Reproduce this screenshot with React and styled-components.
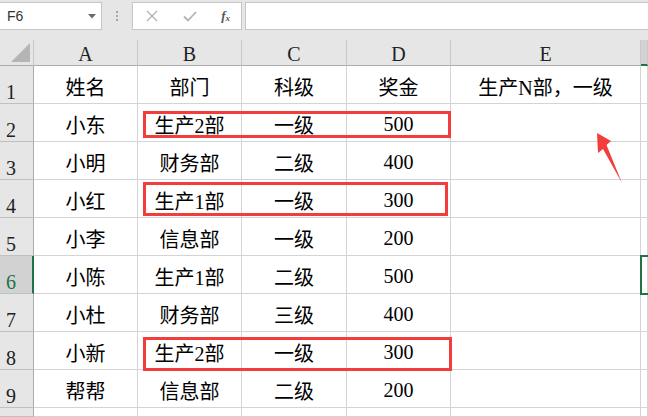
import React from "react";
import styled, { createGlobalStyle } from "styled-components";

const GlobalStyle = createGlobalStyle`
  html, body { margin: 0; padding: 0; overflow: hidden; }
  body { background: #e6e6e6; }
`;

const COLS = ["A", "B", "C", "D", "E"];

const ROWS = [
  ["姓名", "部门", "科级", "奖金", "生产N部，一级"],
  ["小东", "生产2部", "一级", "500", ""],
  ["小明", "财务部", "二级", "400", ""],
  ["小红", "生产1部", "一级", "300", ""],
  ["小李", "信息部", "一级", "200", ""],
  ["小陈", "生产1部", "二级", "500", ""],
  ["小杜", "财务部", "三级", "400", ""],
  ["小新", "生产2部", "一级", "300", ""],
  ["帮帮", "信息部", "二级", "200", ""],
  ["", "", "", "", ""],
];

const MARKS = [
  { top: 71, left: 143, width: 308, height: 27 },
  { top: 142, left: 143, width: 305, height: 34 },
  { top: 297, left: 143, width: 309, height: 34 },
];

function App() {
  return (
    <Page>
      <GlobalStyle />
      <FormulaBar>
        <NameBox>
          <NameText>F6</NameText>
          <svg width="8" height="5" viewBox="0 0 8 5">
            <path d="M0 0 L8 0 L4 4.5 Z" fill="#6b6b6b" />
          </svg>
        </NameBox>
        <Dots>
          <span />
          <span />
          <span />
        </Dots>
        <ButtonBox>
          <svg width="12" height="12" viewBox="0 0 12 12">
            <path d="M1 1 L11 11 M11 1 L1 11" stroke="#b4b4b4" strokeWidth="1.4" fill="none" />
          </svg>
          <svg width="14" height="11" viewBox="0 0 14 11">
            <path d="M1 5.5 L5 9.5 L13 1" stroke="#b4b4b4" strokeWidth="1.8" fill="none" />
          </svg>
          <Fx>
            f<sub>x</sub>
          </Fx>
        </ButtonBox>
        <FormulaInput />
      </FormulaBar>

      <Sheet>
        <Corner>
          <svg width="20" height="20" viewBox="0 0 20 20">
            <path d="M0 19 L19 19 L19 0 Z" fill="#b5b5b5" />
          </svg>
        </Corner>
        {COLS.map((c) => (
          <ColHeader key={c}>{c}</ColHeader>
        ))}
        <ColHeader $selected />

        {ROWS.map((row, i) => (
          <React.Fragment key={i}>
            <RowHeader $selected={i === 5}>{i < 9 ? i + 1 : ""}</RowHeader>
            {row.map((v, j) => (
              <Cell key={j}>{v}</Cell>
            ))}
            <Cell />
          </React.Fragment>
        ))}

        {MARKS.map((m, i) => (
          <RedBox
            key={i}
            style={{ top: m.top, left: m.left, width: m.width, height: m.height }}
          />
        ))}
        <Selection />
        <Arrow width="40" height="60" viewBox="0 0 40 60">
          <path d="M7 3 L21 11 L16.5 15 L32 53 L13 19 L8 23 Z" fill="#f33c3c" />
        </Arrow>
      </Sheet>
    </Page>
  );
}

export default App;

const Page = styled.div`
  width: 648px;
  height: 417px;
  background: #e6e6e6;
  overflow: hidden;
  display: flex;
  flex-direction: column;
`;

const FormulaBar = styled.div`
  height: 40px;
  box-sizing: border-box;
  padding-top: 2px;
  display: flex;
  align-items: flex-start;
`;

const Box = styled.div`
  height: 28px;
  box-sizing: border-box;
  background: #fff;
  border: 1px solid #c6c6c6;
`;

const NameBox = styled(Box)`
  width: 102px;
  display: flex;
  align-items: center;
  justify-content: space-between;
  padding: 0 5px 0 7px;
  border-left: none;
`;

const NameText = styled.span`
  font-family: "Liberation Sans", Arial, sans-serif;
  font-size: 14px;
  color: #333;
`;

const Dots = styled.div`
  width: 30px;
  height: 28px;
  display: flex;
  flex-direction: column;
  align-items: center;
  justify-content: center;
  gap: 2px;

  span {
    width: 2px;
    height: 2px;
    background: #a8a8a8;
  }
`;

const ButtonBox = styled(Box)`
  width: 110px;
  display: flex;
  align-items: center;
  justify-content: space-between;
  padding: 0 11px 0 13px;
`;

const Fx = styled.span`
  font-family: "Liberation Serif", serif;
  font-style: italic;
  font-weight: bold;
  font-size: 13px;
  color: #555;
  sub {
    font-size: 9px;
    vertical-align: -1px;
  }
`;

const FormulaInput = styled(Box)`
  flex: 1;
  margin-left: 3px;
  border-right: none;
`;

const Sheet = styled.div`
  position: relative;
  flex: 1;
  display: grid;
  grid-template-columns: 34px 104px 104px 105px 104px 190px 7px;
  grid-template-rows: 26px repeat(9, 38px) 1fr;
  background: #fff;
  font-family: "Liberation Serif", "Noto Sans CJK SC", serif;
  font-size: 20px;
  color: #000;
`;

const Corner = styled.div`
  background: #e6e6e6;
  border-right: 1px solid #c8c8c8;
  border-bottom: 1px solid #ababab;
  display: flex;
  align-items: flex-end;
  justify-content: flex-end;
  padding: 0 2px 2px 0;
`;

const ColHeader = styled.div`
  box-sizing: border-box;
  background: ${(p) => (p.$selected ? "#d2d2d2" : "#e6e6e6")};
  border-right: 1px solid #c8c8c8;
  border-bottom: ${(p) => (p.$selected ? "2px solid #217346" : "1px solid #ababab")};
  display: flex;
  align-items: center;
  justify-content: center;
  padding-top: 3px;
  color: #222;
`;

const RowHeader = styled.div`
  box-sizing: border-box;
  background: ${(p) => (p.$selected ? "#d2d2d2" : "#e6e6e6")};
  border-right: ${(p) => (p.$selected ? "2px solid #217346" : "1px solid #ababab")};
  border-bottom: 1px solid #c0c0c0;
  color: ${(p) => (p.$selected ? "#217346" : "#222")};
  display: flex;
  align-items: flex-end;
  justify-content: flex-start;
  padding: 0 0 1px 6px;
  line-height: 1;
`;

const Cell = styled.div`
  box-sizing: border-box;
  border-right: 1px solid #d4d4d4;
  border-bottom: 1px solid #d4d4d4;
  display: flex;
  align-items: center;
  justify-content: center;
  padding-top: 4px;
  white-space: nowrap;
  overflow: hidden;
`;

const RedBox = styled.div`
  position: absolute;
  box-sizing: border-box;
  border: 3px solid #f33c3c;
  pointer-events: none;
`;

const Selection = styled.div`
  position: absolute;
  top: 215px;
  left: 640px;
  width: 14px;
  height: 40px;
  box-sizing: border-box;
  border: 2px solid #217346;
`;

const Arrow = styled.svg`
  position: absolute;
  left: 590px;
  top: 90px;
`;
